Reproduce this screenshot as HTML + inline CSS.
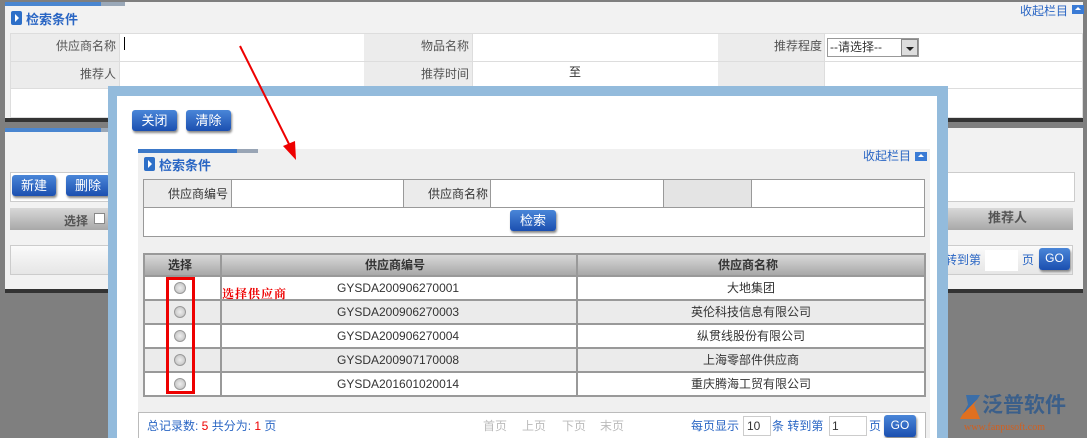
<!DOCTYPE html>
<html><head><meta charset="utf-8"><style>
*{margin:0;padding:0;box-sizing:border-box}
html,body{width:1087px;height:438px;overflow:hidden}
body{background:#7f7f7f;font:12px "Liberation Sans","Noto Sans CJK SC",sans-serif;color:#333;position:relative}
.a{position:absolute}
.t{position:absolute;white-space:nowrap;line-height:14px}
.lbl{background:#ececec}
.btn{position:absolute;height:21px;border-radius:3px;background:linear-gradient(#4a86d8,#1b4fb0);color:#fff;font-size:13px;text-align:center;line-height:21px;box-shadow:1px 2px 2px #888}
.hdr{background:linear-gradient(#d8d8d8,#a8a8a8);font-weight:bold;color:#333;text-align:center}
.ic{position:absolute;width:11px;height:14px;background:#2d6fc8;border-radius:2px}
.ic:after{content:"";position:absolute;left:4px;top:3px;border-left:4px solid #fff;border-top:4px solid transparent;border-bottom:4px solid transparent}
.up{position:absolute;width:12px;height:9px;background:#3a7bd5}
.up:after{content:"";position:absolute;left:3px;top:2px;border-bottom:3px solid #fff;border-left:3px solid transparent;border-right:3px solid transparent}
.blue{color:#2a66c4}
</style></head><body>
<div class="a" style="left:5px;top:2px;width:1078px;height:116px;background:#f2f2f2"></div>
<div class="a" style="left:5px;top:2px;width:96px;height:4px;background:#4a86d0"></div>
<div class="a" style="left:101px;top:2px;width:24px;height:4px;background:#9aa8b8"></div>
<div class="ic" style="left:11px;top:11px"></div>
<div class="t blue" style="left:26px;top:13px;font-size:13px;font-weight:bold">检索条件</div>
<div class="t blue" style="left:1020px;top:4px">收起栏目</div><div class="up" style="left:1072px;top:5px"></div>
<div class="a" style="left:10px;top:33px;width:1073px;height:85px;background:#fff;border:1px solid #ddd"></div>
<div class="a lbl" style="left:11px;top:34px;width:108px;height:54px"></div>
<div class="a lbl" style="left:364px;top:34px;width:108px;height:54px"></div>
<div class="a lbl" style="left:718px;top:34px;width:106px;height:54px"></div>
<div class="a" style="left:10px;top:61px;width:1073px;height:1px;background:#ddd"></div>
<div class="a" style="left:10px;top:88px;width:1073px;height:1px;background:#ddd"></div>
<div class="a" style="left:119px;top:34px;width:1px;height:54px;background:#ddd"></div>
<div class="a" style="left:472px;top:34px;width:1px;height:54px;background:#ddd"></div>
<div class="a" style="left:824px;top:34px;width:1px;height:54px;background:#ddd"></div>
<div class="t" style="left:56px;top:39px;color:#555">供应商名称</div>
<div class="a" style="left:124px;top:37px;width:1px;height:13px;background:#000"></div>
<div class="t" style="left:421px;top:39px;color:#555">物品名称</div>
<div class="t" style="left:774px;top:39px;color:#555">推荐程度</div>
<div class="a" style="left:827px;top:38px;width:92px;height:19px;border:1px solid #999;background:#fff"></div>
<div class="t" style="left:830px;top:40px">--请选择--</div>
<div class="a" style="left:901px;top:39px;width:17px;height:17px;background:#ddd;border:1px solid #888"></div>
<div class="a" style="left:906px;top:47px;border-top:4px solid #222;border-left:4px solid transparent;border-right:4px solid transparent"></div>
<div class="t" style="left:80px;top:67px;color:#555">推荐人</div>
<div class="t" style="left:421px;top:67px;color:#555">推荐时间</div>
<div class="t" style="left:569px;top:65px">至</div>
<div class="a" style="left:5px;top:118px;width:1078px;height:4px;background:#333"></div>
<div class="a" style="left:5px;top:128px;width:1078px;height:161px;background:#f2f2f2"></div>
<div class="a" style="left:5px;top:128px;width:96px;height:4px;background:#4a86d0"></div>
<div class="a" style="left:101px;top:128px;width:24px;height:4px;background:#9aa8b8"></div>
<div class="a" style="left:10px;top:172px;width:1065px;height:30px;background:#fff;border:1px solid #ccc"></div>
<div class="btn" style="left:12px;top:175px;width:44px">新建</div>
<div class="btn" style="left:66px;top:175px;width:44px">删除</div>
<div class="a hdr" style="left:10px;top:208px;width:1063px;height:22px"></div>
<div class="t" style="left:64px;top:214px;font-weight:bold;color:#555">选择</div>
<div class="a" style="left:94px;top:213px;width:11px;height:11px;border:1px solid #888;background:#fff"></div>
<div class="t" style="left:988px;top:211px;font-weight:bold;color:#555;font-size:13px">推荐人</div>
<div class="a" style="left:10px;top:245px;width:1063px;height:30px;background:linear-gradient(#fafafa,#e6e6e6);border:1px solid #ccc"></div>
<div class="t blue" style="left:945px;top:253px">转到第</div>
<div class="a" style="left:985px;top:250px;width:33px;height:21px;background:#fff"></div>
<div class="t blue" style="left:1022px;top:253px">页</div>
<div class="btn" style="left:1039px;top:248px;width:31px;height:22px;font-size:12px">GO</div>
<div class="a" style="left:5px;top:289px;width:1078px;height:4px;background:#333"></div>
<div class="a" style="left:108px;top:86px;width:840px;height:360px;background:#93bbdc"></div>
<div class="a" style="left:117px;top:96px;width:820px;height:350px;background:#fff"></div>
<div class="btn" style="left:132px;top:110px;width:45px">关闭</div>
<div class="btn" style="left:186px;top:110px;width:45px">清除</div>
<div class="a" style="left:138px;top:149px;width:792px;height:300px;background:#f0f0f0"></div>
<div class="a" style="left:138px;top:149px;width:99px;height:4px;background:#3b78c8"></div>
<div class="a" style="left:237px;top:149px;width:21px;height:4px;background:#99a5b5"></div>
<div class="ic" style="left:144px;top:157px"></div>
<div class="t blue" style="left:159px;top:159px;font-size:13px;font-weight:bold">检索条件</div>
<div class="t blue" style="left:863px;top:149px">收起栏目</div><div class="up" style="left:915px;top:152px"></div>
<div class="a" style="left:143px;top:179px;width:782px;height:58px;background:#fff;border:1px solid #999"></div>
<div class="a lbl" style="left:144px;top:180px;width:87px;height:27px;background:#ebebeb"></div>
<div class="a lbl" style="left:404px;top:180px;width:86px;height:27px;background:#ebebeb"></div>
<div class="a lbl" style="left:663px;top:180px;width:88px;height:27px;background:#e4e4e4"></div>
<div class="a" style="left:143px;top:207px;width:782px;height:1px;background:#999"></div>
<div class="a" style="left:231px;top:180px;width:1px;height:27px;background:#999"></div>
<div class="a" style="left:403px;top:180px;width:1px;height:27px;background:#999"></div>
<div class="a" style="left:490px;top:180px;width:1px;height:27px;background:#999"></div>
<div class="a" style="left:663px;top:180px;width:1px;height:27px;background:#999"></div>
<div class="a" style="left:751px;top:180px;width:1px;height:27px;background:#999"></div>
<div class="t" style="left:168px;top:187px">供应商编号</div>
<div class="t" style="left:428px;top:187px">供应商名称</div>
<div class="btn" style="left:510px;top:210px;width:46px">检索</div>
<div class="a" style="left:143px;top:253px;width:783px;height:144px;background:#999"></div>
<div class="a hdr" style="left:145px;top:255px;width:779px;height:20px"></div>
<div class="a" style="left:220px;top:255px;width:2px;height:140px;background:#999"></div>
<div class="a" style="left:576px;top:255px;width:2px;height:140px;background:#999"></div>
<div class="t" style="left:168px;top:258px;font-weight:bold">选择</div>
<div class="t" style="left:365px;top:258px;font-weight:bold">供应商编号</div>
<div class="t" style="left:718px;top:258px;font-weight:bold">供应商名称</div>
<div id="rows"></div>
<div class="a" style="left:166px;top:277px;width:29px;height:117px;border:3px solid #e00"></div>
<div class="t" style="left:222px;top:287px;color:#e00;font-weight:bold;font-family:'Noto Serif CJK SC',serif;font-size:12px;letter-spacing:1px">选择供应商</div>
<div class="a" style="left:138px;top:412px;width:788px;height:30px;background:#fff;border:1px solid #bbb"></div>
<div class="t blue" style="left:147px;top:419px">总记录数: <span style="color:#e00">5</span> 共分为: <span style="color:#e00">1</span> 页</div>
<div class="t" style="left:483px;top:419px;color:#bbb">首页</div>
<div class="t" style="left:522px;top:419px;color:#bbb">上页</div>
<div class="t" style="left:562px;top:419px;color:#bbb">下页</div>
<div class="t" style="left:600px;top:419px;color:#bbb">末页</div>
<div class="t blue" style="left:691px;top:419px">每页显示</div>
<div class="a" style="left:743px;top:416px;width:28px;height:20px;background:#fff;border:1px solid #ccc"></div>
<div class="t" style="left:747px;top:419px">10</div>
<div class="t blue" style="left:772px;top:419px">条 转到第</div>
<div class="a" style="left:829px;top:416px;width:38px;height:20px;background:#fff;border:1px solid #ccc"></div>
<div class="t" style="left:832px;top:419px">1</div>
<div class="t blue" style="left:869px;top:419px">页</div>
<div class="btn" style="left:884px;top:415px;width:32px;height:22px;font-size:12px">GO</div>
<div class="a" style="left:960px;top:395px;width:20px;height:24px;background:linear-gradient(135deg,#3b6ea8 50%,#e07020 50%);clip-path:polygon(30% 0,100% 0,70% 40%,100% 100%,0 100%,40% 40%)"></div>
<div class="t" style="left:982px;top:393px;font-size:21px;line-height:26px;color:#3b5f8a;font-weight:bold">泛普软件</div>
<div class="t" style="left:964px;top:421px;font-size:10px;color:#d06020;font-family:'Liberation Serif',serif">www.fanpusoft.com</div>
<svg class="a" style="left:0;top:0" width="1087" height="438"><line x1="240" y1="46" x2="291" y2="148" stroke="#e00" stroke-width="2"/><polygon points="296,160 283,146 295,141" fill="#e00"/></svg>
<script>
var d=[["GYSDA200906270001","大地集团"],["GYSDA200906270003","英伦科技信息有限公司"],["GYSDA200906270004","纵贯线股份有限公司"],["GYSDA200907170008","上海零部件供应商"],["GYSDA201601020014","重庆腾海工贸有限公司"]];
var h="";d.forEach(function(r,i){var y=277+i*24;var bg=i%2?"#ebebeb":"#fff";
h+='<div class="a" style="left:145px;top:'+y+'px;width:75px;height:22px;background:'+bg+'"></div>';
h+='<div class="a" style="left:222px;top:'+y+'px;width:354px;height:22px;background:'+bg+'"></div>';
h+='<div class="a" style="left:578px;top:'+y+'px;width:346px;height:22px;background:'+bg+'"></div>';
h+='<div class="a" style="left:174px;top:'+(y+5)+'px;width:12px;height:12px;border-radius:50%;border:1px solid #999;background:radial-gradient(#eee,#bbb)"></div>';
h+='<div class="t" style="left:337px;top:'+(y+4)+'px">'+r[0]+'</div>';
h+='<div class="t" style="left:578px;width:346px;text-align:center;top:'+(y+4)+'px">'+r[1]+'</div>';});
document.getElementById("rows").innerHTML=h;
</script>
</body></html>
